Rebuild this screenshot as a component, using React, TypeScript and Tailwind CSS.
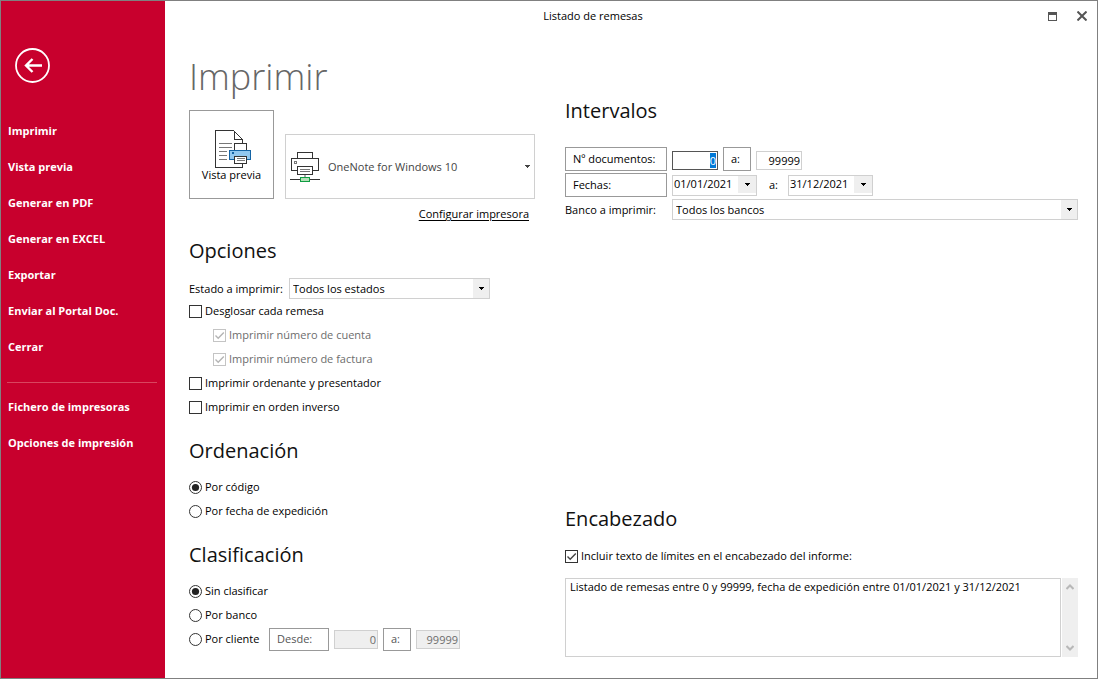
import { useEffect, useRef, type ReactNode } from "react";

const mainActions = [
  "Imprimir",
  "Vista previa",
  "Generar en PDF",
  "Generar en EXCEL",
  "Exportar",
  "Enviar al Portal Doc.",
  "Cerrar",
];
const settingsActions = ["Fichero de impresoras", "Opciones de impresión"];

function BackIcon() {
  return (
    <svg width="35" height="35" viewBox="0 0 35 35" fill="none" stroke="#fff">
      <circle cx="17.5" cy="17.5" r="16.5" strokeWidth="1.8" />
      <path d="M27 17.500H10.500M17.500 11L11 17.500L17.500 24" strokeWidth="2.4" />
    </svg>
  );
}

function PreviewIcon() {
  return (
    <svg width="37" height="39" viewBox="0 0 37 39" fill="none" shapeRendering="crispEdges">
      <path d="M27.500 13.500V9.500L18.500 0.500H0.500V37.500H27.500V34" stroke="#333" fill="#fff" />
      <path d="M19.500 0.500V9.500H27.500" stroke="#333" />
      <path d="M4 13.500H17M4 17.500H17M4 21.500H12M4 25.500H12M4 29.500H12" stroke="#777" />
      <rect x="19.500" y="13.500" width="12" height="8" fill="#fff" stroke="#333" />
      <rect x="14.500" y="20.500" width="21" height="9" fill="#91c8f0" stroke="#1464a5" />
      <rect x="17" y="22" width="2" height="2" fill="#1464a5" />
      <rect x="19.500" y="26.500" width="12" height="7" fill="#fff" stroke="#333" />
      <path d="M22 28.500H30M22 30.500H30" stroke="#777" />
    </svg>
  );
}

function PrinterIcon() {
  return (
    <svg width="30" height="30" viewBox="0 0 30 30" fill="none" shapeRendering="crispEdges">
      <rect x="7.500" y="0.500" width="15" height="6" fill="#fff" stroke="#333" />
      <rect x="1.500" y="6.500" width="27" height="12" fill="#fff" stroke="#333" />
      <rect x="4.500" y="9.500" width="2" height="2" stroke="#777" />
      <rect x="7.500" y="14.500" width="15" height="8" fill="#fff" stroke="#333" />
      <path d="M10 17.500H20M10 19.500H20" stroke="#777" />
      <path d="M15 23V25" stroke="#aaa" strokeWidth="2" />
      <path d="M0 27.500H30" stroke="#333" />
      <rect x="10.500" y="25.500" width="9" height="4" fill="#b5dfb8" stroke="#0f9d42" />
    </svg>
  );
}

function Caret() {
  return (
    <svg width="5" height="3" viewBox="0 0 5 3" shapeRendering="crispEdges" fill="currentColor">
      <path d="M0 0H5V1H4V2H3V3H2V2H1V1H0Z" />
    </svg>
  );
}

function Heading({ children }: { children: ReactNode }) {
  return <h2 className="h-8 text-[20px] leading-8 text-[#111]">{children}</h2>;
}

type OptionProps = {
  type: "checkbox" | "radio";
  label: string;
  name?: string;
  checked?: boolean;
  disabled?: boolean;
};

function Option({ type, label, name, checked, disabled }: OptionProps) {
  const radio = type === "radio";
  return (
    <label
      className={
        "flex h-6 items-center gap-[3px] " + (disabled ? "ml-6 text-[#6d6d6d]" : "text-black")
      }
    >
      <span className="grid size-[13px] shrink-0 place-items-center">
        <input
          type={type}
          name={name}
          defaultChecked={checked}
          disabled={disabled}
          className={
            "peer col-start-1 row-start-1 size-[13px] appearance-none border border-[#333] bg-white disabled:border-[#c4c4c4] " +
            (radio ? "rounded-full" : "")
          }
        />
        <svg
          width="13"
          height="13"
          viewBox="0 0 13 13"
          className="pointer-events-none col-start-1 row-start-1 text-[#444] opacity-0 peer-checked:opacity-100 peer-disabled:text-[#b4b4b4]"
        >
          {radio ? (
            <circle cx="6.5" cy="6.5" r="3.6" fill="#222" />
          ) : (
            <path d="M2.500 6.500L5.200 9.200L10.800 3.400" fill="none" stroke="currentColor" strokeWidth="1.4" />
          )}
        </svg>
      </span>
      {label}
    </label>
  );
}

function Select({ id, value, className }: { id: string; value: string; className: string }) {
  return (
    <div className={"relative h-[21px] border border-[#d0d0d0] " + className}>
      <select id={id} className="block h-full w-full appearance-none bg-white pl-[3px] pr-5 outline-none">
        <option>{value}</option>
      </select>
      <span className="pointer-events-none absolute inset-y-0 right-0 flex w-4 items-center justify-center bg-[#efefef]">
        <Caret />
      </span>
    </div>
  );
}

function DateBox({ label, value }: { label: string; value: string }) {
  return (
    <div className="flex h-[21px] w-[85px] border border-[#d0d0d0] pb-0.5">
      <input aria-label={label} defaultValue={value} className="w-0 flex-1 pl-px outline-none" />
      <button aria-label={"Abrir calendario: " + label} className="flex w-[18px] items-center justify-center bg-[#efefef]">
        <Caret />
      </button>
    </div>
  );
}

export default function App() {
  const firstDocument = useRef<HTMLInputElement>(null);

  useEffect(() => {
    firstDocument.current?.focus();
    firstDocument.current?.select();
  }, []);

  return (
    <div className="flex min-h-screen border border-[#808080] bg-white font-['Open_Sans','Noto_Sans',sans-serif] text-[11px] leading-4 text-black">
      <aside className="w-[164px] shrink-0 bg-[#c8002d] px-1.5 pt-[47px] font-bold text-white">
        <button aria-label="Volver" className="ml-2 block">
          <BackIcon />
        </button>
        <nav className="mt-[30px]">
          <ul>
            {mainActions.map((item) => (
              <li key={item}>
                <a href="#" className="flex h-9 items-center px-px">{item}</a>
              </li>
            ))}
          </ul>
          <hr className="mb-[6px] mr-0.5 mt-[17px] border-[#d9455f]" />
          <ul>
            {settingsActions.map((item) => (
              <li key={item}>
                <a href="#" className="flex h-9 items-center px-px">{item}</a>
              </li>
            ))}
          </ul>
        </nav>
      </aside>

      <main className="flex min-w-0 flex-1 flex-col">
        <header className="flex h-[30px] items-center">
          <p className="flex-1 text-center">Listado de remesas</p>
          <div className="flex pl-4">
            <button aria-label="Maximizar" className="flex h-6 w-[30px] items-center justify-center">
              <svg width="9" height="9" viewBox="0 0 9 9" shapeRendering="crispEdges">
                <path d="M0 0H9V9H0ZM1 3V8H8V3Z" fill="#555" fillRule="evenodd" />
              </svg>
            </button>
            <button aria-label="Cerrar ventana" className="flex h-6 w-[30px] items-center justify-center">
              <svg width="10" height="10" viewBox="0 0 10 10" stroke="#555" strokeWidth="2">
                <path d="M0.500 0.500L9.500 9.500M9.500 0.500L0.500 9.500" />
              </svg>
            </button>
          </div>
        </header>

        <div className="grid flex-1 grid-cols-[346px_minmax(0,1fr)] gap-[30px] pl-6 pr-[19px]">
          <div className="pb-[26px]">
            <h1 className="mt-[22px] h-12 text-[36px] font-light leading-[48px] text-[#666]">Imprimir</h1>

            <div className="mt-[9px] flex items-end gap-[11px]">
              <button className="flex h-[89px] w-[85px] flex-col items-center border border-[#999] pt-[19px] text-center">
                <span className="pl-1">
                  <PreviewIcon />
                </span>
                <span className="-mt-0.5">Vista previa</span>
              </button>
              <div className="relative h-[65px] flex-1 border border-[#d0d0d0]">
                <span className="pointer-events-none absolute inset-y-0 left-1 flex items-center">
                  <PrinterIcon />
                </span>
                <select aria-label="Impresora" className="h-full w-full appearance-none pl-[42px] text-[#444] outline-none">
                  <option>OneNote for Windows 10</option>
                </select>
                <span className="pointer-events-none absolute inset-y-0 right-1 flex items-center text-[#444]">
                  <Caret />
                </span>
              </div>
            </div>
            <div className="mt-[7px] flex h-4 justify-end pr-1.5">
              <a href="#" className="underline underline-offset-2">Configurar impresora</a>
            </div>

            <section className="mt-[13px]">
              <Heading>Opciones</Heading>
              <div className="mt-[11px] flex items-center">
                <label htmlFor="estado" className="w-[100px]">Estado a imprimir:</label>
                <Select id="estado" value="Todos los estados" className="w-[201px]" />
              </div>
              <Option type="checkbox" label="Desglosar cada remesa" />
              <Option type="checkbox" label="Imprimir número de cuenta" checked disabled />
              <Option type="checkbox" label="Imprimir número de factura" checked disabled />
              <Option type="checkbox" label="Imprimir ordenante y presentador" />
              <Option type="checkbox" label="Imprimir en orden inverso" />
            </section>

            <section className="mt-4">
              <Heading>Ordenación</Heading>
              <div className="mt-2">
                <Option type="radio" name="orden" label="Por código" checked />
                <Option type="radio" name="orden" label="Por fecha de expedición" />
              </div>
            </section>

            <section className="mt-4">
              <Heading>Clasificación</Heading>
              <div className="mt-2">
                <Option type="radio" name="clase" label="Sin clasificar" checked />
                <Option type="radio" name="clase" label="Por banco" />
                <div className="flex h-6 items-center gap-[5px]">
                  <div className="w-[75px]">
                    <Option type="radio" name="clase" label="Por cliente" />
                  </div>
                  <button className="h-[23px] w-[60px] border border-[#999] pl-[7px] text-left text-[#555]">Desde:</button>
                  <input aria-label="Desde cliente" disabled defaultValue="0" className="h-[19px] w-11 border border-[#d0d0d0] bg-[#efefef] px-px text-right text-[#6d6d6d]" />
                  <button className="h-[23px] w-7 border border-[#999] pl-[7px] text-left text-[#555]">a:</button>
                  <input aria-label="Hasta cliente" disabled defaultValue="99999" className="h-[19px] w-11 border border-[#d0d0d0] bg-[#efefef] px-px text-right text-[#6d6d6d]" />
                </div>
              </div>
            </section>
          </div>

          <div className="flex flex-col pb-[21px] pt-16">
            <section>
              <Heading>Intervalos</Heading>
              <div className="mt-5 flex flex-col gap-0.5">
                <div className="flex h-6 items-center gap-[5px]">
                  <button className="h-6 w-[102px] border border-[#999] pl-[7px] text-left">Nº documentos:</button>
                  <input
                    ref={firstDocument}
                    aria-label="Desde documento"
                    defaultValue="0"
                    className="mt-0.5 h-[19px] w-[46px] border border-[#555] px-px text-right outline-none selection:bg-[#0078d7] selection:text-white"
                  />
                  <button className="h-6 w-7 border border-[#999] pl-[7px] text-left">a:</button>
                  <input aria-label="Hasta documento" defaultValue="99999" className="mt-0.5 h-[19px] w-[46px] border border-[#d0d0d0] px-px text-right outline-none" />
                </div>
                <div className="flex h-6 items-center gap-[5px]">
                  <button className="h-6 w-[102px] border border-[#999] pl-[7px] text-left">Fechas:</button>
                  <DateBox label="Desde fecha" value="01/01/2021" />
                  <span className="w-[21px] pl-[7px]">a:</span>
                  <DateBox label="Hasta fecha" value="31/12/2021" />
                </div>
                <div className="flex items-center">
                  <label htmlFor="banco" className="w-[107px] shrink-0">Banco a imprimir:</label>
                  <Select id="banco" value="Todos los bancos" className="flex-1" />
                </div>
              </div>
            </section>

            <section className="mt-auto">
              <Heading>Encabezado</Heading>
              <div className="mt-[9px]">
                <Option type="checkbox" label="Incluir texto de límites en el encabezado del informe:" checked />
              </div>
              <div className="mt-[10px] flex h-[79px] gap-px">
                <textarea
                  aria-label="Texto del encabezado"
                  className="min-w-0 flex-1 resize-none border border-[#d0d0d0] px-1 outline-none"
                  defaultValue="Listado de remesas entre 0 y 99999, fecha de expedición entre 01/01/2021 y 31/12/2021"
                />
                <div className="flex w-4 flex-col items-center justify-between bg-[#efefef] py-1.5 text-[#b8b8b8]">
                  <button aria-label="Desplazar arriba">
                    <svg width="8" height="6" viewBox="0 0 8 6" fill="none" stroke="currentColor" strokeWidth="2" className="block">
                      <path d="M0.500 5L4 1.500L7.500 5" />
                    </svg>
                  </button>
                  <button aria-label="Desplazar abajo">
                    <svg width="8" height="6" viewBox="0 0 8 6" fill="none" stroke="currentColor" strokeWidth="2" className="block">
                      <path d="M0.500 1L4 4.500L7.500 1" />
                    </svg>
                  </button>
                </div>
              </div>
            </section>
          </div>
        </div>
      </main>
    </div>
  );
}
